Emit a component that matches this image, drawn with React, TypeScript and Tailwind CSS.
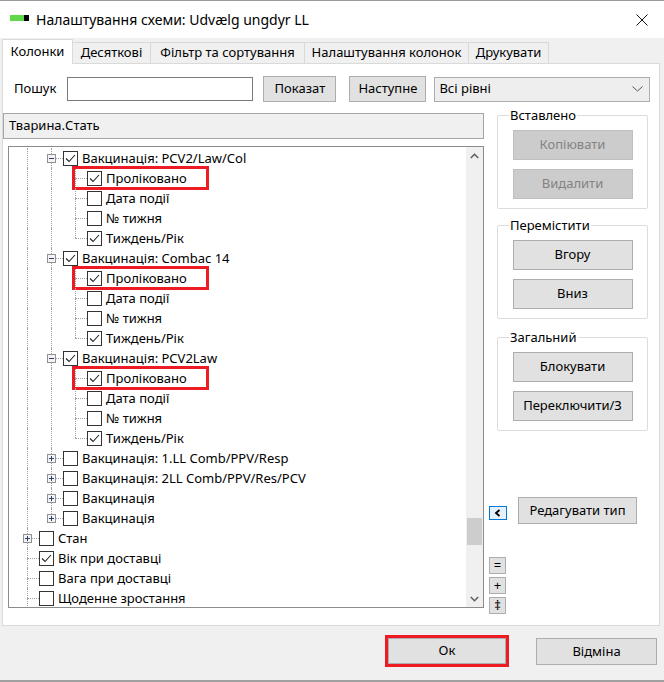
import React from 'react';

type Row = { lvl: 1 | 2 | 3; exp?: '+' | '-'; chk?: boolean; text: string; last?: boolean; red?: boolean };

const vac = (name: string): Row[] => [
  { lvl: 2, exp: '-', chk: true, text: name },
  { lvl: 3, chk: true, text: 'Проліковано', red: true },
  { lvl: 3, text: 'Дата події' },
  { lvl: 3, text: '№ тижня' },
  { lvl: 3, chk: true, text: 'Тиждень/Рік', last: true },
];

const rows: Row[] = [
  ...vac('Вакцинація: PCV2/Law/Col'),
  ...vac('Вакцинація: Combac 14'),
  ...vac('Вакцинація: PCV2Law'),
  { lvl: 2, exp: '+', text: 'Вакцинація: 1.LL Comb/PPV/Resp' },
  { lvl: 2, exp: '+', text: 'Вакцинація: 2LL Comb/PPV/Res/PCV' },
  { lvl: 2, exp: '+', text: 'Вакцинація' },
  { lvl: 2, exp: '+', text: 'Вакцинація', last: true },
  { lvl: 1, exp: '+', text: 'Стан' },
  { lvl: 1, chk: true, text: 'Вік при доставці' },
  { lvl: 1, text: 'Вага при доставці' },
  { lvl: 1, text: 'Щоденне зростання' },
];

function Expander({ open }: { open: boolean }) {
  return (
    <svg className="absolute left-[8px] top-[6px]" width="9" height="9" viewBox="0 0 9 9">
      <rect x="0.5" y="0.5" width="8" height="8" fill="#f3f3f3" stroke="#919191" />
      <path d="M2 4.5h5" stroke="#2f3f6f" />
      {!open && <path d="M4.5 2v5" stroke="#2f3f6f" />}
    </svg>
  );
}

function Cell({ v, h, exp }: { v: 'full' | 'half'; h?: boolean; exp?: '+' | '-' }) {
  return (
    <div className="relative w-6 h-5 shrink-0">
      {v === 'full' ? (
        <div className="absolute left-3 top-0 h-5 border-l border-dotted border-[#a0a0a0]" />
      ) : (
        <div className="absolute left-3 top-0 h-[10px] border-l border-dotted border-[#a0a0a0]" />
      )}
      {h && <div className="absolute left-3 right-0 top-[10px] border-t border-dotted border-[#a0a0a0]" />}
      {exp && <Expander open={exp === '-'} />}
    </div>
  );
}

function Check({ on }: { on?: boolean }) {
  return (
    <span className="w-[15px] h-[15px] border border-[#333] bg-white flex items-center justify-center shrink-0">
      {on && (
        <svg width="13" height="13" viewBox="0 0 13 13">
          <path d="M2 6.5 L5 9.5 L11 3" fill="none" stroke="#222" strokeWidth="1.1" />
        </svg>
      )}
    </span>
  );
}

function TreeRow({ r }: { r: Row }) {
  const own = <Cell v={r.last ? 'half' : 'full'} h exp={r.exp} />;
  return (
    <div className="relative flex items-center h-5">
      {r.lvl >= 2 && <Cell v="full" />}
      {r.lvl >= 3 && <Cell v="full" />}
      {own}
      <Check on={r.chk} />
      <span className="ml-1 pt-[1px] whitespace-nowrap text-[13px] text-black">{r.text}</span>
      {r.red && <div className="absolute left-[57px] top-[-2px] w-[137px] h-[24px] border-[3px] border-[#ed1c24]" />}
    </div>
  );
}

function Btn({ children, disabled, className = '' }: { children: React.ReactNode; disabled?: boolean; className?: string }) {
  return (
    <div
      className={`flex items-center justify-center border text-[13px] ${
        disabled ? 'bg-[#cccccc] border-[#bfbfbf] text-[#838383]' : 'bg-[#e1e1e1] border-[#adadad] text-black'
      } ${className}`}
    >
      {children}
    </div>
  );
}

function Group({ title, children, className = '' }: { title: string; children: React.ReactNode; className?: string }) {
  return (
    <div className={`relative ml-[8px] w-[151px] h-[94px] border border-[#dcdcdc] rounded-[2px] flex flex-col items-center pt-[14px] gap-[9px] ${className}`}>
      <span className="absolute left-[11px] top-[-9px] px-[1px] bg-white text-[13px] leading-[16px] text-black">{title}</span>
      {children}
    </div>
  );
}

const tabs = [
  { t: 'Колонки', w: 'w-[71px]' },
  { t: 'Десяткові', w: 'w-[78px]' },
  { t: 'Фільтр та сортування', w: 'w-[154px]' },
  { t: 'Налаштування колонок', w: 'w-[164px]' },
  { t: 'Друкувати', w: 'w-[80px]' },
];

export default function App() {
  return (
    <div className="w-[664px] h-[682px] bg-[#f0f0f0] flex flex-col border-b-2 border-[#a0a0a0] font-['Noto_Sans','Liberation_Sans',sans-serif] text-black overflow-hidden">
      {/* title bar */}
      <div className="h-[38px] bg-white border-t border-[#9a9a9a] flex items-center shrink-0">
        <div className="ml-[10px] flex mb-[4px]">
          <div className="w-[14px] h-[6px] bg-[#5fd94a]" />
          <div className="w-[5px] h-[6px] bg-black" />
        </div>
        <span className="ml-[7px] text-[14px] text-black">Налаштування схеми: Udvælg ungdyr LL</span>
        <svg className="ml-auto mr-[16px]" width="12" height="12" viewBox="0 0 12 12">
          <path d="M0.5 0.5 L11.5 11.5 M11.5 0.5 L0.5 11.5" stroke="#111" strokeWidth="1" />
        </svg>
      </div>

      {/* tabs */}
      <div className="h-[25px] flex items-end pl-[2px] shrink-0">
        {tabs.map((t, i) =>
          i === 0 ? (
            <div key={t.t} className={`${t.w} h-[25px] mb-[-1px] relative z-10 bg-white border border-b-0 border-[#dadada] flex items-center justify-center text-[13px]`}>
              {t.t}
            </div>
          ) : (
            <div key={t.t} className={`${t.w} h-[21px] bg-[#f0f0f0] border border-b-0 border-l-0 border-[#d9d9d9] flex items-center justify-center text-[13px]`}>
              {t.t}
            </div>
          )
        )}
      </div>

      {/* tab panel */}
      <div className="ml-[2px] w-[658px] h-[563px] bg-white border border-[#dadada] shrink-0 flex flex-col">
        <div className="mt-[12px] h-[26px] flex items-center">
          <span className="ml-[11px] text-[13px]">Пошук</span>
          <div className="ml-[11px] w-[186px] h-[24px] border border-[#7a7a7a] bg-white" />
          <Btn className="ml-[10px] w-[73px] h-[26px]">Показат</Btn>
          <Btn className="ml-[13px] w-[77px] h-[26px]">Наступне</Btn>
          <div className="ml-[8px] w-[216px] h-[25px] border border-[#acacac] bg-[#eeeeee] flex items-center px-[4px] text-[13px]">
            Всі рівні
            <svg className="ml-auto mr-[2px]" width="11" height="6" viewBox="0 0 11 6">
              <path d="M0.5 0.5 L5.5 5 L10.5 0.5" fill="none" stroke="#555" strokeWidth="1" />
            </svg>
          </div>
        </div>

        <div className="mt-[11px] flex">
          {/* left column */}
          <div className="w-[481px] flex flex-col">
            <div className="h-[26px] bg-[#f0f0f0] border border-[#a5a5a5] flex items-center pl-[5px] text-[13px]">Тварина.Стать</div>
            <div className="mt-[7px] ml-[5px] w-[476px] h-[462px] border border-[#8c8c8c] flex overflow-hidden">
              <div className="flex-1 pt-[1px] pl-[6px] overflow-hidden">
                {rows.map((r, i) => (
                  <TreeRow key={i} r={r} />
                ))}
              </div>
              <div className="w-[17px] bg-[#f0f0f0] flex flex-col">
                <div className="h-[17px] flex items-center justify-center">
                  <svg width="9" height="6" viewBox="0 0 9 6">
                    <path d="M0.8 5 L4.5 1.3 L8.2 5" fill="none" stroke="#606060" strokeWidth="1.6" />
                  </svg>
                </div>
                <div className="h-[354px]" />
                <div className="mx-[1px] h-[27px] bg-[#cdcdcd]" />
                <div className="flex-1" />
                <div className="h-[17px] flex items-center justify-center">
                  <svg width="9" height="6" viewBox="0 0 9 6">
                    <path d="M0.8 1 L4.5 4.7 L8.2 1" fill="none" stroke="#606060" strokeWidth="1.6" />
                  </svg>
                </div>
              </div>
            </div>
          </div>

          {/* right column */}
          <div className="ml-[5px] w-[159px] flex flex-col">
            <Group title="Вставлено" className="mt-[2px]">
              <Btn disabled className="w-[120px] h-[30px]">Копіювати</Btn>
              <Btn disabled className="w-[120px] h-[30px]">Видалити</Btn>
            </Group>
            <Group title="Перемістити" className="mt-[16px]">
              <Btn className="w-[120px] h-[30px]">Вгору</Btn>
              <Btn className="w-[120px] h-[30px]">Вниз</Btn>
            </Group>
            <Group title="Загальний" className="mt-[18px]">
              <Btn className="w-[120px] h-[30px]">Блокувати</Btn>
              <Btn className="w-[120px] h-[30px]">Переключити/З</Btn>
            </Group>

            <div className="mt-[66px] flex items-start">
              <div className="mt-[9px] w-[18px] h-[14px] border border-[#0078d7] bg-[#e5f1fb] flex items-center justify-center">
                <svg width="8" height="8" viewBox="0 0 8 8">
                  <path d="M5.5 1 L2 4 L5.5 7" fill="none" stroke="#000" strokeWidth="1.8" />
                </svg>
              </div>
              <Btn className="ml-[11px] w-[119px] h-[27px]">Редагувати тип</Btn>
            </div>

            <div className="mt-[33px] flex flex-col gap-[3px]">
              <Btn className="w-[17px] h-[17px] leading-none">=</Btn>
              <Btn className="w-[17px] h-[17px] leading-none">+</Btn>
              <Btn className="w-[17px] h-[17px] leading-none">‡</Btn>
            </div>
          </div>
        </div>
      </div>

      {/* footer */}
      <div className="flex-1 flex items-start">
        <div className="ml-[385px] mt-[9px] w-[124px] h-[32px] border-[3px] border-[#ed1c24]">
          <Btn className="w-full h-full">Ок</Btn>
        </div>
        <Btn className="ml-[27px] mt-[12px] w-[121px] h-[27px]">Відміна</Btn>
      </div>
    </div>
  );
}
